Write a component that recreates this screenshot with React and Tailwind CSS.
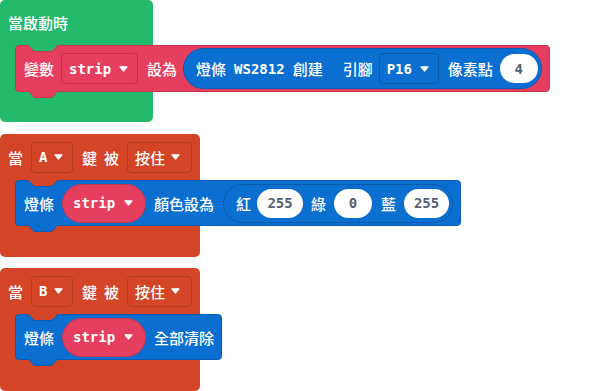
const MONO = "font-['DejaVu_Sans_Mono','Noto_Sans_CJK_TC',monospace] text-[14px] font-bold";
const CJK = "font-['Noto_Sans_CJK_TC',sans-serif] text-[15px] font-medium leading-none";

function Arrow() {
  return (
    <svg width="9" height="6" viewBox="0 0 9 6" className="shrink-0">
      <path d="M1 0.8 H8 L4.5 5 Z" fill="white" stroke="white" strokeWidth="1.2" strokeLinejoin="round" />
    </svg>
  );
}

function Label({ children, className = '' }) {
  return <span className={`${CJK} text-white whitespace-nowrap ${className}`}>{children}</span>;
}

function Mono({ children, className = '' }) {
  return <span className={`${MONO} text-white whitespace-nowrap leading-none ${className}`}>{children}</span>;
}

// square dropdown drawn inside a block of the same colour
function Dropdown({ children, width, border, className = '' }) {
  return (
    <div
      className={`flex h-[31px] shrink-0 items-center justify-between rounded-[4px] border pl-[7px] pr-[9px] ${border} ${className}`}
      style={{ width }}
    >
      {children}
      <Arrow />
    </div>
  );
}

// round variable reporter
function StripPill({ className = '' }) {
  return (
    <div className={`flex h-[39px] w-[84px] shrink-0 items-center justify-between rounded-full border border-[#c8354f] bg-[#e63e5e] pl-[10px] pr-[12px] ${className}`}>
      <Mono>strip</Mono>
      <Arrow />
    </div>
  );
}

function Num({ children, width, className = '' }) {
  return (
    <div
      className={`flex h-[29px] shrink-0 items-center justify-center rounded-full bg-white ${className}`}
      style={{ width }}
    >
      <span className={`${MONO} leading-none text-[#575e75]`}>{children}</span>
    </div>
  );
}

function Notch({ parent, stroke }) {
  return (
    <svg width="31" height="8" viewBox="0 0 31 8" className="absolute left-[12px] top-[-1px]">
      <polygon points="0,0 6,6 24,6 30,0" fill={parent} />
      <polyline points="0,0.5 6,6.5 24,6.5 30,0.5" fill="none" stroke={stroke} strokeWidth="1" />
    </svg>
  );
}

function Bump({ fill, stroke }) {
  return (
    <svg width="31" height="8" viewBox="0 0 31 8" className="absolute bottom-[-7px] left-[12px]">
      <polygon points="0,0 6,7 24,7 30,0" fill={fill} />
      <polyline points="0,0.5 6,7.5 24,7.5 30,0.5" fill="none" stroke={stroke} strokeWidth="1" />
    </svg>
  );
}

function ButtonHat({ letter, top, children }) {
  return (
    <div
      className="absolute left-0 flex h-[123px] w-[200px] flex-col rounded-[5px] bg-[#d44426] pt-[8px]"
      style={{ top }}
    >
      <div className="flex h-[30px] items-center pl-[8px]">
        <Label>當</Label>
        <Dropdown width={42} border="border-[#b2391f]" className="ml-[8px]">
          <Mono>{letter}</Mono>
        </Dropdown>
        <Label className="ml-[9px]">鍵</Label>
        <Label className="ml-[7px]">被</Label>
        <Dropdown width={65} border="border-[#b2391f]" className="ml-[8px] pr-[11px]">
          <Label>按住</Label>
        </Dropdown>
      </div>
      {children}
    </div>
  );
}

function BlueBlock({ children }) {
  return (
    <div className="relative ml-[15px] mt-[8px] flex h-[46px] w-max items-center rounded-[4px] border border-[#0a5cb2] bg-[#0b6fd1] pl-[8px] pr-[7px]">
      <Notch parent="#d44426" stroke="#0a5cb2" />
      <Bump fill="#0b6fd1" stroke="#0a5cb2" />
      <Label>燈條</Label>
      <StripPill className="ml-[8px]" />
      {children}
    </div>
  );
}

export default function App() {
  return (
    <div className="relative h-[391px] w-[600px] overflow-hidden bg-white">
      {/* on start */}
      <div className="absolute left-0 top-0 flex h-[122px] w-[153px] flex-col rounded-[5px] bg-[#22b96a] pt-[7px]">
        <div className="flex h-[30px] items-center pl-[8px]">
          <Label>當啟動時</Label>
        </div>
        <div className="relative ml-[15px] mt-[8px] flex h-[47px] w-max items-center rounded-[4px] border border-[#c8354f] bg-[#e63e5e] pl-[8px] pr-[7px]">
          <Notch parent="#22b96a" stroke="#c8354f" />
          <Bump fill="#e63e5e" stroke="#c8354f" />
          <Label>變數</Label>
          <Dropdown width={77} border="border-[#c4304c]" className="ml-[7px]">
            <Mono>strip</Mono>
          </Dropdown>
          <Label className="ml-[9px]">設為</Label>
          <div className="ml-[6px] flex h-[41px] items-center rounded-full border border-[#0a5cb2] bg-[#0b6fd1] pl-[12px] pr-[3px]">
            <Label>燈條</Label>
            <Mono className="ml-[8px]">WS2812</Mono>
            <Label className="ml-[8px]">創建</Label>
            <Label className="ml-[20px]">引腳</Label>
            <Dropdown width={60} border="border-[#0a5aab]" className="ml-[6px]">
              <Mono>P16</Mono>
            </Dropdown>
            <Label className="ml-[9px]">像素點</Label>
            <Num width={38} className="ml-[7px]">4</Num>
          </div>
        </div>
      </div>

      {/* on A pressed */}
      <ButtonHat letter="A" top={134}>
        <BlueBlock>
          <Label className="ml-[8px]">顏色設為</Label>
          <div className="ml-[9px] flex h-[39px] items-center rounded-full border border-[#0a5aab] bg-[#0b6fd1] pl-[12px] pr-[3px]">
            <Label>紅</Label>
            <Num width={46} className="ml-[6px]">255</Num>
            <Label className="ml-[8px]">綠</Label>
            <Num width={38} className="ml-[8px]">0</Num>
            <Label className="ml-[9px]">藍</Label>
            <Num width={45} className="ml-[8px]">255</Num>
          </div>
        </BlueBlock>
      </ButtonHat>

      {/* on B pressed */}
      <ButtonHat letter="B" top={268}>
        <BlueBlock>
          <Label className="ml-[8px]">全部清除</Label>
        </BlueBlock>
      </ButtonHat>
    </div>
  );
}
